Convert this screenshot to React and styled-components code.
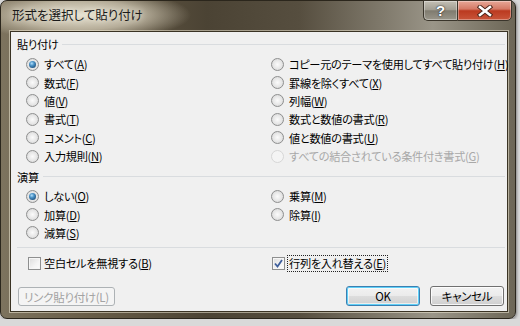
import React from "react";
import styled, { createGlobalStyle } from "styled-components";

const GlobalStyle = createGlobalStyle`
  body {
    margin: 0;
    background: #d9d9d9;
    font-family: "Noto Sans CJK JP", "Noto Sans", sans-serif;
  }
`;

const pasteOptions = [
  { label: "すべて", key: "A", checked: true },
  { label: "数式", key: "F" },
  { label: "値", key: "V" },
  { label: "書式", key: "T" },
  { label: "コメント", key: "C" },
  { label: "入力規則", key: "N" },
  { label: "コピー元のテーマを使用してすべて貼り付け", key: "H" },
  { label: "罫線を除くすべて", key: "X" },
  { label: "列幅", key: "W" },
  { label: "数式と数値の書式", key: "R" },
  { label: "値と数値の書式", key: "U" },
  { label: "すべての結合されている条件付き書式", key: "G", disabled: true },
];

const opOptions = [
  { label: "しない", key: "O", checked: true },
  { label: "加算", key: "D" },
  { label: "減算", key: "S" },
  { label: "乗算", key: "M" },
  { label: "除算", key: "I" },
];

const App = () => {
  return (
    <>
      <GlobalStyle />
      <Window>
        <TitleBar>
          <Title>形式を選択して貼り付け</Title>
          <Caption>
            <HelpButton>?</HelpButton>
            <CloseButton>
              <svg width="16" height="12" viewBox="0 0 16 12">
                <path
                  d="M3 2 L13 10 M13 2 L3 10"
                  stroke="#4a2418"
                  strokeWidth="4.4"
                  strokeLinecap="square"
                />
                <path
                  d="M3 2 L13 10 M13 2 L3 10"
                  stroke="#ffffff"
                  strokeWidth="2.6"
                  strokeLinecap="square"
                />
              </svg>
            </CloseButton>
          </Caption>
        </TitleBar>
        <Client>
          <GroupHead>
            <span>貼り付け</span>
            <Rule />
          </GroupHead>
          <OptionGrid $rows={6}>
            {pasteOptions.map((o) => (
              <Option key={o.key} $disabled={o.disabled}>
                <Radio $checked={o.checked} $disabled={o.disabled} />
                <span>
                  {o.label}(<u>{o.key}</u>)
                </span>
              </Option>
            ))}
          </OptionGrid>
          <GroupHead $gap>
            <span>演算</span>
            <Rule />
          </GroupHead>
          <OptionGrid $rows={3}>
            {opOptions.map((o) => (
              <Option key={o.key}>
                <Radio $checked={o.checked} />
                <span>
                  {o.label}(<u>{o.key}</u>)
                </span>
              </Option>
            ))}
          </OptionGrid>
          <Divider />
          <CheckRow>
            <Option>
              <CheckBox />
              <span>
                空白セルを無視する(<u>B</u>)
              </span>
            </Option>
            <Option>
              <CheckBox>
                <svg width="9" height="9" viewBox="0 0 9 9">
                  <path
                    d="M1 4.5 L3.5 7.5 L8 1"
                    fill="none"
                    stroke="#3f5f9c"
                    strokeWidth="1.8"
                  />
                </svg>
              </CheckBox>
              <Focused>
                行列を入れ替える(<u>E</u>)
              </Focused>
            </Option>
          </CheckRow>
          <ButtonRow>
            <Button $disabled $width={97}>
              リンク貼り付け(L)
            </Button>
            <ButtonGroup>
              <Button $default $width={74}>
                OK
              </Button>
              <Button $width={74}>キャンセル</Button>
            </ButtonGroup>
          </ButtonRow>
        </Client>
      </Window>
    </>
  );
};

export default App;

const Window = styled.div`
  width: 516px;
  height: 319px;
  box-sizing: border-box;
  border: 1px solid #2b261c;
  border-radius: 7px;
  padding: 0 7px 6px 9px;
  display: flex;
  flex-direction: column;
  background: radial-gradient(
      ellipse 110px 26px at 80px 14px,
      rgba(236, 231, 214, 0.95) 0%,
      rgba(210, 202, 182, 0.75) 55%,
      rgba(160, 150, 128, 0) 100%
    ),
    linear-gradient(
      90deg,
      #7d735e 0%,
      #675c47 18%,
      #4b4334 40%,
      #564e3f 58%,
      #7f796b 74%,
      #9a9588 84%,
      #6c6656 100%
    );
  box-shadow: 1px 1px 3px rgba(0, 0, 0, 0.4);
`;

const TitleBar = styled.div`
  height: 30px;
  display: flex;
  align-items: flex-start;
  justify-content: space-between;
`;

const Title = styled.div`
  margin: 6px 0 0 2px;
  font-size: 12.5px;
  line-height: 16px;
  color: #1a1a1a;
  font-feature-settings: "palt";
  text-shadow: 0 0 6px rgba(255, 255, 245, 0.9);
`;

const Caption = styled.div`
  display: flex;
  margin-right: -4px;
  margin-top: -1px;
`;

const CaptionButton = styled.div`
  height: 21px;
  box-sizing: border-box;
  border: 1px solid #3a352b;
  display: flex;
  align-items: center;
  justify-content: center;
  box-shadow: inset 0 0 0 1px rgba(255, 255, 255, 0.35);
`;

const HelpButton = styled(CaptionButton)`
  width: 34px;
  border-right: none;
  border-radius: 0 0 0 5px;
  background: linear-gradient(
    180deg,
    #c4c0b5 0%,
    #a29e92 45%,
    #7f7b6f 52%,
    #9a968a 100%
  );
  color: #fff;
  font: bold 15px "Liberation Sans", sans-serif;
  text-shadow: 0 0 2px #333, 0 0 1px #222;
`;

const CloseButton = styled(CaptionButton)`
  width: 55px;
  border-radius: 0 0 5px 0;
  background: linear-gradient(
    180deg,
    #e7a797 0%,
    #d47a66 42%,
    #bb3a20 52%,
    #c9553a 100%
  );
`;

const Client = styled.div`
  flex: 1;
  display: flex;
  flex-direction: column;
  background: #f0f0f0;
  border: 1px solid #3a3324;
  box-shadow: 0 0 0 1px rgba(240, 234, 214, 0.55);
  padding: 6px 2px 5px 6px;
  font-size: 11.2px;
  font-feature-settings: "palt";
  letter-spacing: -0.3px;
  color: #000;
`;

const GroupHead = styled.div`
  height: 12px;
  display: flex;
  align-items: center;
  gap: 4px;
  line-height: 12px;
  margin-top: ${(p) => (p.$gap ? "5.6px" : "0")};
  margin-bottom: ${(p) => (p.$gap ? "4px" : "5px")};
`;

const Rule = styled.div`
  flex: 1;
  height: 1px;
  background: #d9dcdf;
`;

const OptionGrid = styled.div`
  display: grid;
  grid-template-columns: 245px 1fr;
  grid-template-rows: repeat(${(p) => p.$rows}, 18.4px);
  grid-auto-flow: column;
  padding-left: 9px;
`;

const Option = styled.label`
  display: flex;
  align-items: center;
  gap: 5px;
  white-space: nowrap;
  color: ${(p) => (p.$disabled ? "#a8a8a8" : "#000")};
`;

const Radio = styled.span`
  position: relative;
  flex: none;
  width: 13px;
  height: 13px;
  box-sizing: border-box;
  border-radius: 50%;
  border: 1px solid ${(p) => (p.$disabled ? "#d6d6d6" : "#8e8f8f")};
  background: ${(p) =>
    p.$disabled
      ? "#f4f4f4"
      : "radial-gradient(circle at 50% 50%, #fbfbfb 0%, #e6e6e6 55%, #cfcfcf 100%)"};

  &::after {
    content: "";
    display: ${(p) => (p.$checked ? "block" : "none")};
    position: absolute;
    inset: 2px;
    border-radius: 50%;
    background: radial-gradient(
      circle at 40% 35%,
      #b4e0fb 0%,
      #4b93c7 35%,
      #1d4f7c 80%,
      #173d5f 100%
    );
  }
`;

const Divider = styled.div`
  height: 1px;
  margin: 5px 0 0 0;
  background: #d9dcdf;
`;

const CheckRow = styled.div`
  display: grid;
  grid-template-columns: 244px 1fr;
  height: 18px;
  margin-top: 6px;
  padding-left: 11px;
`;

const CheckBox = styled.span`
  flex: none;
  width: 13px;
  height: 13px;
  box-sizing: border-box;
  border: 1px solid #8e8f8f;
  background: linear-gradient(135deg, #dcdcdc 0%, #f4f4f4 60%, #fdfdfd 100%);
  box-shadow: inset 0 0 0 1px #f6f6f6;
  display: flex;
  align-items: center;
  justify-content: center;
  margin-right: -2px;
`;

const Focused = styled.span`
  outline: 1px dotted #222;
  outline-offset: 0;
  padding: 0 1px;
  line-height: 15px;
`;

const ButtonRow = styled.div`
  margin-top: auto;
  display: flex;
  justify-content: space-between;
  align-items: flex-start;
  padding-left: 1px;
  padding-right: 1px;
`;

const ButtonGroup = styled.div`
  display: flex;
  gap: 10px;
`;

const Button = styled.div`
  width: ${(p) => p.$width}px;
  height: ${(p) => (p.$disabled ? "19px" : "20px")};
  margin-top: ${(p) => (p.$disabled ? "1px" : "0")};
  box-sizing: border-box;
  border-radius: 3px;
  display: flex;
  align-items: center;
  justify-content: center;
  font-size: 11.5px;
  color: ${(p) => (p.$disabled ? "#a3a3a3" : "#000")};
  border: 1px solid
    ${(p) => (p.$disabled ? "#adb2b5" : p.$default ? "#3c7fb1" : "#707070")};
  background: ${(p) =>
    p.$disabled
      ? "#f4f4f4"
      : "linear-gradient(180deg, #f2f2f2 0%, #ebebeb 48%, #dddddd 52%, #cfcfcf 100%)"};
  box-shadow: ${(p) =>
    p.$default
      ? "inset 0 0 0 1px #5fd0f8, inset 0 0 0 2px rgba(255,255,255,0.6)"
      : p.$disabled
      ? "none"
      : "inset 0 0 0 1px rgba(255,255,255,0.8)"};
`;
